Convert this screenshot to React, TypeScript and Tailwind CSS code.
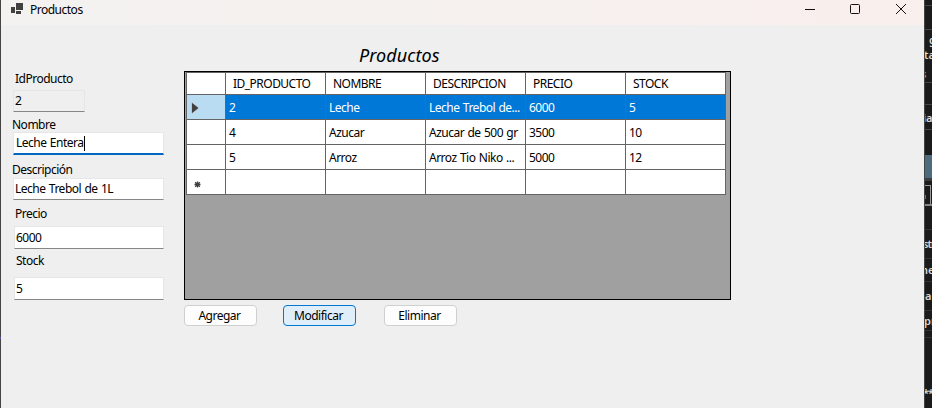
import React from "react";

type FieldProps = {
  label: string;
  value: string;
  labelClass: string;
  boxClass: string;
  focused?: boolean;
};

function Field({ label, value, labelClass, boxClass, focused }: FieldProps) {
  return (
    <div className="flex flex-col">
      <span className={`h-[15px] leading-[15px] ${labelClass}`}>{label}</span>
      <div
        className={`flex items-center border border-[#e6e6e6] ${
          focused ? "border-b-2 border-b-[#0067c0]" : "border-b-[#868686]"
        } ${boxClass}`}
      >
        <span>{value}</span>
        {focused && <span className="ml-px h-[15px] w-px bg-black" />}
      </div>
    </div>
  );
}

const columns = ["ID_PRODUCTO", "NOMBRE", "DESCRIPCION", "PRECIO", "STOCK"];

const rows = [
  ["2", "Leche", "Leche Trebol de...", "6000", "5"],
  ["4", "Azucar", "Azucar de 500 gr", "3500", "10"],
  ["5", "Arroz", "Arroz Tio Niko ...", "5000", "12"],
  ["", "", "", "", ""],
];

function ProductGrid() {
  return (
    <div className="h-[229px] w-[547px] border border-black bg-[#a0a0a0] pl-px">
      <div className="flex w-[540px] flex-col border-l border-t border-[#646464]">
        <div className="flex h-[22px] border-b border-[#646464] bg-white">
          <div className="w-[39px] border-r border-[#646464]" />
          {columns.map((c) => (
            <div
              key={c}
              className="flex w-[100px] items-center border-r border-[#646464] pl-[7px] tracking-[-0.52px]"
            >
              {c}
            </div>
          ))}
        </div>
        {rows.map((r, i) => (
          <div
            key={i}
            className={`flex h-[25px] border-b border-[#646464] ${i === 0 ? "bg-[#0078d7] text-white" : "bg-white"}`}
          >
            <div
              className={`flex w-[39px] items-center border-r border-[#646464] ${i === 0 ? "bg-[#badcf3]" : ""}`}
            >
              {i === 0 && (
                <svg className="ml-[4px] mt-[2px]" width="9" height="12" viewBox="0 0 9 12">
                  <path d="M.5 0 8 6 .5 12Z" fill="#404040" stroke="#dcebf6" strokeWidth=".6" />
                </svg>
              )}
              {i === 3 && (
                <svg
                  className="ml-[7px] mt-[4px]"
                  width="7"
                  height="7"
                  viewBox="0 0 7 7"
                  stroke="#404040"
                  strokeWidth="1.3"
                >
                  <path d="M3.5 .5v6M.5 3.5h6M1.2 1.2l4.6 4.6M5.8 1.2 1.2 5.8" />
                </svg>
              )}
            </div>
            {r.map((v, j) => (
              <div
                key={j}
                className="flex w-[100px] items-center whitespace-nowrap border-r border-[#646464] pl-[3px] pt-px"
              >
                {v}
              </div>
            ))}
          </div>
        ))}
      </div>
    </div>
  );
}

function EditorStrip() {
  return (
    <div className="flex h-[408px] w-[8px] flex-col overflow-hidden border-l border-[#444] bg-[#1b1b1b] text-[11px] font-semibold leading-[14px] tracking-normal text-[#d8d8d8]">
      <div className="h-[6px] shrink-0 border-b border-[#454545]" />
      <div className="h-[24px] shrink-0 border-b border-[#454545]" />
      <div className="flex h-[53px] shrink-0 flex-col border-b border-[#454545] pt-[3px]">
        <span className="ml-[4px]">g</span>
        <span className="-ml-px mt-px">ta</span>
        <span className="-ml-[4px] mt-[5px] text-[#b99a7a]">s</span>
      </div>
      <div className="h-[22px] shrink-0 border-b border-[#454545]" />
      <div className="h-[25px] shrink-0 border-b border-[#454545] pt-[6px]">
        <span className="-ml-[2px]">ia</span>
      </div>
      <div className="mt-[25px] h-[23px] shrink-0 bg-[#4d6b7c]" />
      <div className="h-[3px] shrink-0 bg-[#3d3d3d]" />
      <div className="mt-[4px] h-[19px] w-[6px] shrink-0 border-r border-t border-[#999]">
        <div className="mt-[9px] h-[4px] w-px bg-[#a65b3c]" />
      </div>
      <div className="h-[2px] shrink-0 bg-[#858585]" />
      <div className="h-[24px] shrink-0 border-b border-[#333]" />
      <div className="h-[29px] shrink-0 border-b border-[#333] pt-[7px]">
        <span className="-ml-[2px] tracking-[-1px]">str</span>
      </div>
      <div className="h-[23px] shrink-0 border-b border-[#333] pt-[4px]">
        <span className="-ml-[4px]">ne</span>
      </div>
      <div className="h-[29px] shrink-0 border-b border-[#333] pt-[7px]">ar</div>
      <div className="h-[20px] shrink-0 border-b border-[#333] pt-[3px]">
        <span className="-ml-px">pr</span>
      </div>
      <div className="h-[7px] shrink-0 border-b border-[#333]" />
      <div className="pt-[48px]">
        <span className="-ml-[2px] tracking-[-1px]">**</span>
      </div>
    </div>
  );
}

const buttonBase = "flex h-[21px] w-[73px] items-center justify-center rounded-[4px] border pr-[2px]";

export default function App() {
  return (
    <div className="flex h-[408px] w-[932px] overflow-hidden bg-[#efefef] font-['Noto_Sans','Open_Sans',sans-serif] text-[12px] leading-[16px] tracking-[-0.5px] text-black [word-spacing:0.7px]">
      <div className="flex w-px flex-col bg-[#444]">
        <div className="mt-[337px] h-[2px] bg-[#6950a5]" />
      </div>
      <main className="flex w-[923px] flex-col">
        <header className="flex h-[25px] items-start justify-between bg-linear-to-r from-[#f3f2f0] via-[#f6f1ef] to-[#f9efed]">
          <div className="flex items-start pl-[10px] pt-[2px]">
            <svg className="mt-px" width="13" height="12" viewBox="0 0 13 12" fill="#404040">
              <path d="M5 0h7v7H5zM0 4h4v6H0zM5 8h5v3H5z" />
            </svg>
            <span className="ml-[6px]">Productos</span>
          </div>
          <svg className="mr-[15px]" width="104" height="18" viewBox="0 0 104 18" fill="none" stroke="#111">
            <path d="M0 9.5h10" />
            <rect x="45.5" y="4.5" width="9" height="9" rx="1" />
            <path d="m91 4 10 10M101 4 91 14" />
          </svg>
        </header>
        <div className="flex">
          <aside className="flex w-[183px] flex-col pl-[12px] pt-[46px]">
            <Field label="IdProducto" value="2" labelClass="pl-[2px]" boxClass="mt-[4px] h-[22px] w-[72px] pl-px" />
            <div className="mt-[5px]">
              <Field
                label="Nombre"
                value="Leche Entera"
                labelClass="-ml-px"
                boxClass="h-[23px] w-[151px] bg-white pl-[2px]"
                focused
              />
            </div>
            <div className="mt-[7px]">
              <Field
                label="Descripción"
                value="Leche Trebol de 1L"
                labelClass="-ml-px"
                boxClass="mt-px h-[22px] w-[151px] bg-white pl-px"
              />
            </div>
            <div className="mt-[6px]">
              <Field
                label="Precio"
                value="6000"
                labelClass="pl-[2px]"
                boxClass="ml-px mt-[5px] h-[23px] w-[150px] bg-white pl-px"
              />
            </div>
            <div className="mt-[4px]">
              <Field
                label="Stock"
                value="5"
                labelClass="pl-[3px]"
                boxClass="ml-px mt-[9px] h-[23px] w-[150px] bg-white pl-px"
              />
            </div>
          </aside>
          <section className="flex flex-col">
            <h1 className="flex h-[46px] pl-[175px] pt-[18px] text-[18px] italic leading-[24px] tracking-[0.05px]">
              Productos
            </h1>
            <ProductGrid />
            <div className="flex pt-[5px]">
              <button className={`${buttonBase} border-[#d0d0d0] bg-[#fdfdfd]`}>Agregar</button>
              <button className={`${buttonBase} ml-[26px] border-[#0078d4] bg-[#e0eef9]`}>Modificar</button>
              <button className={`${buttonBase} ml-[28px] border-[#d0d0d0] bg-[#fdfdfd]`}>Eliminar</button>
            </div>
          </section>
        </div>
      </main>
      <EditorStrip />
    </div>
  );
}
